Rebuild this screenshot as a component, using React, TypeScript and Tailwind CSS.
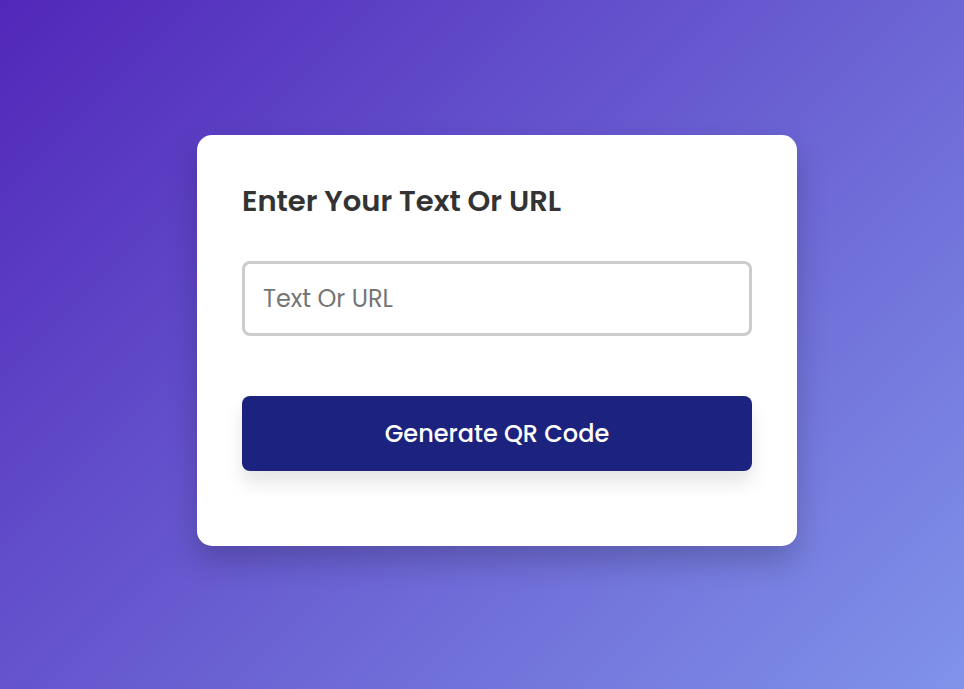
export default function App() {
  return (
    <div className="flex min-h-screen items-center justify-center bg-[linear-gradient(135deg,#5127b9,#8093e9)] pt-4 pr-4 pb-6 pl-[46px] font-[Poppins,Inter,sans-serif]">
      <main className="w-full max-w-[600px] rounded-[15px] bg-white px-[45px] pt-12 pb-[75px] shadow-[0_15px_30px_rgba(0,0,0,0.2)]">
        <form onSubmit={(event) => event.preventDefault()}>
          <label htmlFor="qr-text" className="block text-[29px] leading-9 font-semibold text-[#333333]">
            Enter Your Text Or URL
          </label>
          <input
            id="qr-text"
            type="text"
            placeholder="Text Or URL"
            className="mt-[42px] block h-[75px] w-full rounded-lg border-3 border-[#cccccc] bg-white px-[18px] text-2xl text-[#333333] outline-none placeholder:text-[#757575]"
          />
          <button
            type="submit"
            className="mt-[60px] block h-[75px] w-full rounded-lg bg-[#1c237e] text-2xl font-medium text-white shadow-[0_12px_18px_rgba(0,0,0,0.1)]"
          >
            Generate QR Code
          </button>
        </form>
      </main>
    </div>
  );
}
